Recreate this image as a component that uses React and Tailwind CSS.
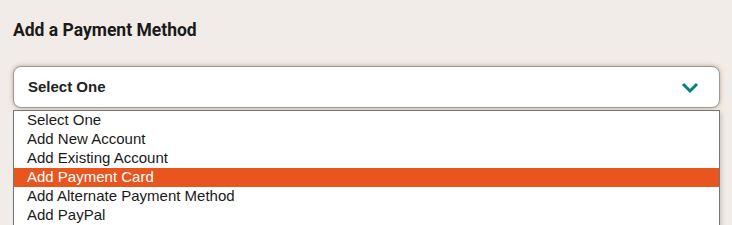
import React from "react";

const items = [
  "Select One",
  "Add New Account",
  "Add Existing Account",
  "Add Payment Card",
  "Add Alternate Payment Method",
  "Add PayPal",
];

export default function App() {
  return (
    <div className="min-h-[225px] w-full bg-[#f1ece8] pl-[13px] pr-[12px] pt-[19px] overflow-hidden">
      <h2
        className="text-[17.5px] font-bold leading-[22px] text-[#1a1a1a]"
        style={{ fontFamily: "Roboto, 'Liberation Sans', sans-serif" }}
      >
        Add a Payment Method
      </h2>
      <div className="mt-[25px] flex h-[42px] items-center justify-between rounded-[8px] border border-[#9a9a9a] bg-white pl-[14px] pr-[20px] shadow-[0_0_4px_rgba(150,100,50,0.55)]">
        <span
          className="text-[15px] font-bold text-[#222]"
          style={{ fontFamily: "'Liberation Sans', Arial, sans-serif" }}
        >
          Select One
        </span>
        <svg width="18" height="12" viewBox="0 0 18 12" className="mt-[1px]">
          <path d="M2 2 L9 9 L16 2" fill="none" stroke="#00837b" strokeWidth="3" />
        </svg>
      </div>
      <ul
        className="mt-[2px] border border-[#767676] bg-white shadow-[2px_2px_4px_rgba(0,0,0,0.15)]"
        style={{ fontFamily: "'Liberation Sans', Arial, sans-serif" }}
      >
        {items.map((t, i) => (
          <li
            key={t}
            className={
              i === 3
                ? "h-[19px] pl-[13px] text-[15px] leading-[18px] bg-[#e8551f] text-white"
                : "h-[19px] pl-[13px] text-[15px] leading-[18px] text-[#1a1a1a]"
            }
          >
            {t}
          </li>
        ))}
      </ul>
    </div>
  );
}
